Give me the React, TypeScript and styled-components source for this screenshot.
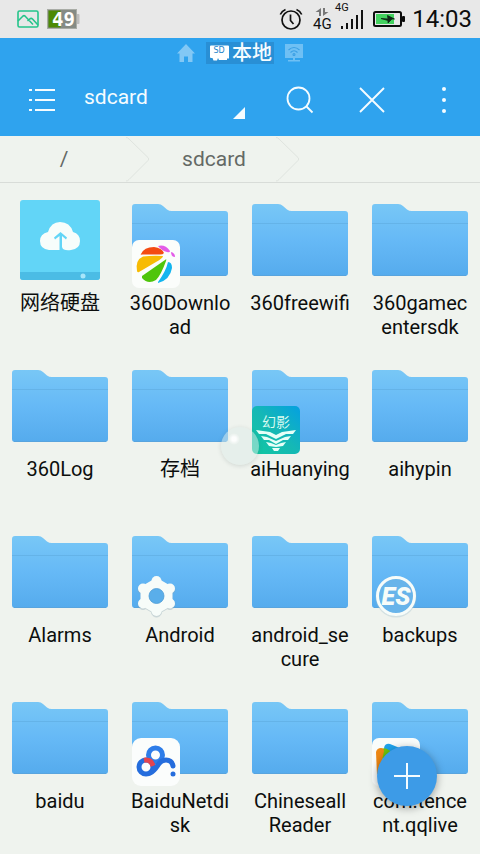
import React from "react";
import styled, { createGlobalStyle } from "styled-components";

const GlobalStyle = createGlobalStyle`
  *, *::before, *::after { box-sizing: border-box; }
  body {
    margin: 0;
    background: #eff3ee;
    color: #0c0e0d;
    font-family: Roboto, "Noto Sans CJK SC", sans-serif;
  }
  button { font: inherit; color: inherit; background: none; border: 0; padding: 0; cursor: pointer; }
  svg { display: block; flex: none; }
`;

/* ---------- status bar ---------- */

const StatusBar = styled.div`
  display: flex;
  align-items: center;
  justify-content: space-between;
  height: 38px;
  padding: 0 8px 0 16px;
  background: #e8e8e8;
`;

const StatusGroup = styled.div<{ $gap: number }>`
  display: flex;
  align-items: center;
  gap: ${(p) => p.$gap}px;
`;

const Clock = styled.time`
  font-size: 24px;
  line-height: 38px;
  color: #0d0d0d;
`;

const PictureIcon = () => (
  <svg width="24" height="20" viewBox="0 0 24 20" fill="none" stroke="#25c48a" strokeWidth="1.6">
    <rect x="2" y="2" width="20" height="16" rx="1.5" />
    <path d="M2 12 L7 7 Q8 6.300 9 7 L17 15.500 M11.500 12 L14.500 9.500 Q15.500 9 16.500 10 L22 16" />
  </svg>
);

const BatteryLevelIcon = () => (
  <svg width="33" height="20" viewBox="0 0 33 20">
    <rect x="29" y="5" width="3.500" height="10" rx="1" fill="#bdbdbd" />
    <rect x="0.500" y="0.500" width="29" height="19" fill="#858b85" stroke="#a9aca6" />
    <rect x="1.500" y="1.500" width="12" height="17" fill="#4c8a05" />
    <text x="5" y="17" fontFamily="DejaVu Sans Mono" fontWeight="700" fontSize="19" fill="#fff">
      49
    </text>
  </svg>
);

const AlarmIcon = () => (
  <svg width="24" height="24" viewBox="0 0 24 24" fill="none" stroke="#111" strokeWidth="1.7">
    <circle cx="12" cy="13" r="9" />
    <path d="M11.500 7.500 V13.500 L14.500 17" />
    <path d="M1.300 7.500 Q3 4 6.500 2.500 M22.700 7.500 Q21 4 17.500 2.500" />
  </svg>
);

const SignalIcon = () => (
  <svg width="57" height="38" viewBox="-3 -4 57 38">
    <g fill="#777">
      <path d="M9 4 V12 H7 V8 H3.500 Z M11 12 V4 H13 V8 H16.500 Z" />
    </g>
    <text x="1" y="25" fontSize="15" fill="#111">4G</text>
    <text x="23" y="7" fontSize="11" fill="#111">4G</text>
    <g fill="#111">
      <rect x="29" y="22" width="2" height="3" />
      <rect x="34" y="19" width="2" height="6" />
      <rect x="39" y="15" width="2" height="10" />
      <rect x="44" y="11" width="2" height="14" />
      <rect x="49" y="6" width="2" height="19" />
    </g>
  </svg>
);

const ChargingIcon = () => (
  <svg width="34" height="18" viewBox="0 0 34 18">
    <rect x="2" y="2" width="27" height="14" rx="1.500" fill="none" stroke="#0c0c0c" strokeWidth="2" />
    <rect x="30" y="6" width="3" height="6" rx="1" fill="#0c0c0c" />
    <rect x="4" y="4" width="18" height="10" fill="#43d15f" />
    <path d="M9 8.500 L16 9 L15.500 5.500 L22.500 9 L20 9 L16 13 L16 10.500 Z" fill="#102818" stroke="#102818" strokeWidth="0.800" />
  </svg>
);

/* ---------- header ---------- */

const Header = styled.header`
  background: #2fa3ee;
  color: #f5fcff;
`;

const TabRow = styled.nav`
  display: flex;
  justify-content: center;
  align-items: center;
  gap: 11px;
  height: 29px;
`;

const TabButton = styled.button<{ $active?: boolean }>`
  display: flex;
  align-items: center;
  gap: 3px;
  height: 22px;
  padding: ${(p) => (p.$active ? "0 2px 0 4px" : "0")};
  background: ${(p) => (p.$active ? "#298fd5" : "transparent")};
  font-size: 20px;
  font-weight: 500;
  line-height: 22px;
`;

const Toolbar = styled.div`
  display: flex;
  align-items: center;
  height: 69px;
  padding: 0 0 3px 6px;
`;

const IconButton = styled.button`
  display: flex;
  align-items: center;
  justify-content: center;
  width: 72px;
  height: 64px;
`;

const PathPicker = styled.label`
  display: flex;
  flex: 1;
  align-items: flex-end;
  height: 64px;
  padding: 0 19px 13px 6px;
`;

const PathSelect = styled.select`
  flex: 1;
  min-width: 0;
  height: 40px;
  padding: 0 0 4px;
  border: 0;
  appearance: none;
  background: transparent;
  color: inherit;
  font: 21px Roboto, sans-serif;
`;

const HomeIcon = () => (
  <svg width="18" height="18" viewBox="0 0 18 18" fill="#82c8f5">
    <path d="M9 0 L18 9.500 H15.500 V18 H11 V12.500 H7 V18 H2.500 V9.500 H0 Z" />
  </svg>
);

const SdIcon = () => (
  <svg width="19" height="16" viewBox="0 0 19 16">
    <path
      d="M1 0.500 H18 Q19 0.500 19 1.500 V13.500 H17 V15 H9 L8 13 L7 15.500 H3.500 L2.500 13 H1 Q0 13 0 12 V1.500 Q0 0.500 1 0.500 Z"
      fill="#fff"
    />
    <text x="3.500" y="8" fontFamily="DejaVu Sans" fontSize="8" fill="#2384ca">SD</text>
  </svg>
);

const NetworkIcon = () => (
  <svg width="18" height="18" viewBox="0 0 18 18">
    <path d="M0 0 H18 V14 H10 V16 H15 V17.500 H3 V16 H8 V14 H0 Z" fill="#6fc0f4" />
    <g fill="none" stroke="#3a9fe4" strokeWidth="1.100">
      <path d="M3.500 6 Q9 1 14.500 6 M5.500 8.500 Q9 5 12.500 8.500" />
      <circle cx="9" cy="10.500" r="1" />
    </g>
  </svg>
);

const ListIcon = () => (
  <svg width="28" height="24" viewBox="0 0 28 24" fill="#f5fcff">
    <path d="M1 1h3v2H1z M7 1h20v2H7z M1 11h3v2H1z M7 11h20v2H7z M1 21h3v2H1z M7 21h20v2H7z" />
  </svg>
);

const SearchIcon = () => (
  <svg width="28" height="28" viewBox="0 0 28 28" fill="none" stroke="#f5fcff" strokeWidth="1.800">
    <circle cx="12.500" cy="12.500" r="11" />
    <path d="M20 20 L26.500 26.500" />
  </svg>
);

const CloseIcon = () => (
  <svg width="28" height="28" viewBox="0 0 28 28" fill="none" stroke="#f5fcff" strokeWidth="1.900">
    <path d="M2 2 L26 26 M26 2 L2 26" />
  </svg>
);

const MoreIcon = () => (
  <svg width="6" height="28" viewBox="0 0 6 28" fill="#f5fcff">
    <circle cx="3" cy="3" r="2" />
    <circle cx="3" cy="14" r="2" />
    <circle cx="3" cy="25" r="2" />
  </svg>
);

const Corner = () => (
  <svg width="12" height="12" viewBox="0 0 12 12" fill="#f5fcff">
    <path d="M12 0 V12 H0 Z" />
  </svg>
);

/* ---------- breadcrumbs ---------- */

const Breadcrumbs = styled.nav`
  display: flex;
  height: 47px;
  border-bottom: 1px solid #d8dcd8;
`;

const Crumb = styled.a`
  display: flex;
  align-items: center;
  width: 150px;
  color: #646965;
  font-size: 21px;
  text-decoration: none;

  & > span { padding-left: 2px; }
`;

const CrumbText = styled.span`
  flex: 1;
  text-align: center;
`;

const CrumbArrow = () => (
  <svg width="24" height="46" viewBox="0 0 24 46" fill="none" stroke="#dfe4df">
    <path d="M0 1.500 Q2 1.500 3 3 L22 21.500 Q23.500 23 22 24.500 L3 43.500 Q2 45 0 45" />
  </svg>
);

/* ---------- file grid ---------- */

const FileGrid = styled.ul`
  display: grid;
  grid-template-columns: repeat(4, 1fr);
  grid-auto-rows: 166px;
  margin: 0;
  padding: 0;
  list-style: none;
`;

const FileButton = styled.button`
  display: flex;
  flex-direction: column;
  align-items: center;
  width: 100%;
  padding: 9px 9px 0;
`;

const Thumb = styled.span`
  position: relative;
  display: flex;
  align-items: center;
  justify-content: center;
  width: 96px;
  height: 96px;
`;

const Badge = styled.span`
  position: absolute;
  left: 0;
  bottom: 0;
`;

const FileName = styled.span`
  width: 102px;
  margin-top: 3px;
  font-size: 20px;
  line-height: 24px;
  text-align: center;
  word-break: break-all;
`;

const FolderIcon = () => (
  <svg width="96" height="72" viewBox="0 0 96 72">
    <defs>
      <linearGradient id="folder" x1="0" y1="0" x2="0" y2="1">
        <stop offset="0" stopColor="#78c7f6" />
        <stop offset="0.500" stopColor="#66b9f6" />
        <stop offset="1" stopColor="#55abed" />
      </linearGradient>
    </defs>
    <path
      d="M3 0 H26 Q29 0 31 2 L35 5.500 Q37 7 40 7 H93 Q96 7 96 10 V69 Q96 72 93 72 H3 Q0 72 0 69 V3 Q0 0 3 0 Z"
      fill="url(#folder)"
    />
    <path d="M0 19.500 H96" stroke="#64b3e8" />
    <path d="M2 71.500 H94" stroke="#58a4de" />
  </svg>
);

const CloudDriveIcon = () => (
  <svg width="82" height="82" viewBox="0 0 82 82">
    <rect x="1" y="1" width="80" height="80" rx="3" fill="#62d5f7" />
    <path d="M1 73 H81 V78 Q81 81 78 81 H4 Q1 81 1 78 Z" fill="#4bbce5" />
    <circle cx="64" cy="77" r="2.500" fill="#a8e6fa" />
    <path
      d="M30 51 Q21 50 21 42 Q21 35 29 33 Q32 23 41 23 Q51 23 54 33 Q61 35 61 42 Q61 50 52 51 Q44 52 43 48 V37 L47 40.500 L48 38.500 L41.500 33 L35 38.500 L36 40.500 L40.500 37 V51 Z"
      fill="#f7fdfb"
    />
  </svg>
);

const Download360Badge = () => (
  <svg width="48" height="48" viewBox="0 0 48 48">
    <rect width="48" height="48" rx="7" fill="#fbfdfb" />
    <path d="M9 14 Q12 7 22 7 Q30 8 32 13 Q31 14.500 28 14.500 H10 Q8 15 9 14 Z" fill="#f44b12" />
    <path d="M5 31 Q3 20 11 16.500 Q20 15.500 31 16 Q31 18 24 22 L7 32 Q5.500 33 5 31 Z" fill="#f7bb05" />
    <path d="M10 36 L33 20 Q35 18 34 21 Q29 35 24 40 Q16 45 10 38 Z" fill="#4fc50b" />
    <path d="M26 42 Q34 31 36 22 Q40 22 40 28 Q38 40 26 43 Z" fill="#12b5ef" />
    <path d="M26 6 Q33 4 38 11 Q38 13 35 12 Q30 11 26 6 Z M39 12 Q43 13 43 17 Q39 17 39 12 Z" fill="#e35be8" />
  </svg>
);

const HuanyingBadge = () => (
  <svg width="48" height="48" viewBox="0 0 48 48">
    <defs>
      <linearGradient id="huanying" x1="0" y1="1" x2="1" y2="0">
        <stop offset="0" stopColor="#12c8a0" />
        <stop offset="0.500" stopColor="#15b8b5" />
        <stop offset="1" stopColor="#04a0e1" />
      </linearGradient>
    </defs>
    <rect width="48" height="48" rx="5" fill="url(#huanying)" />
    <text x="24" y="21" fontFamily="Noto Sans CJK SC" fontSize="14" textAnchor="middle" fill="#d7faf0">
      幻影
    </text>
    <g fill="#e6fff7">
      <path d="M4 24 L18 26 L24 29 L30 26 L44 24 L41 28 L34 28 L24 33 L14 28 L7 28 Z" />
      <path d="M9 30 L15 31 L24 35 L33 31 L39 30 L36 34 L31 34 L24 38 L17 34 L12 34 Z" />
      <path d="M14 36 L19 37 L24 39 L29 37 L34 36 L31 40 L24 41 L17 40 Z" />
      <path d="M20 42 H28 L26 45 H22 Z" />
    </g>
  </svg>
);

const GearBadge = () => {
  const shape = (
    <>
      <path d="M24.500 9 L37.500 16.500 V31.500 L24.500 39 L11.500 31.500 V16.500 Z" strokeWidth="6" strokeLinejoin="round" />
      <circle cx="24.500" cy="9" r="5" />
      <circle cx="38" cy="16.500" r="5" />
      <circle cx="38" cy="31.500" r="5" />
      <circle cx="24.500" cy="39" r="5" />
      <circle cx="11" cy="31.500" r="5" />
      <circle cx="11" cy="16.500" r="5" />
    </>
  );
  return (
    <svg width="48" height="48" viewBox="0 0 48 48">
      <g fill="#8fa9b5" stroke="#8fa9b5" opacity="0.400" transform="translate(0 1)">{shape}</g>
      <g fill="#f7fcf9" stroke="#f7fcf9" strokeWidth="0">{shape}</g>
      <circle cx="24.500" cy="24" r="7.500" fill="#5aaeea" stroke="#4c9cd4" strokeWidth="0.800" />
    </svg>
  );
};

const EsBadge = () => (
  <svg width="48" height="48" viewBox="0 0 48 48">
    <circle cx="24" cy="25" r="19" fill="#68b3e8" stroke="#a9c2cd" strokeWidth="3" strokeOpacity="0.400" />
    <circle cx="24" cy="24" r="18.500" fill="#68b4ea" stroke="#f7fcf9" strokeWidth="3" />
    <text x="24" y="33" fontFamily="Roboto" fontSize="25" fontWeight="900" fontStyle="italic" textAnchor="middle" fill="#f7fcf9">
      ES
    </text>
  </svg>
);

const NetdiskBadge = () => (
  <svg width="48" height="48" viewBox="0 0 48 48" fill="none" strokeWidth="5">
    <rect width="48" height="48" rx="9" fill="#fbfdfc" />
    <circle cx="23.500" cy="17" r="7" stroke="#2e7de9" />
    <circle cx="14" cy="29" r="7" stroke="#256ddd" />
    <path d="M12 22.300 Q19 21 21 28" stroke="#e34450" />
    <path d="M18 35 Q22 33 26 27 Q29 22 34 22 Q40 22 41 28" stroke="#256ddd" strokeLinecap="round" />
    <circle cx="41" cy="36" r="2.500" fill="#256ddd" stroke="none" />
  </svg>
);

const VideoBadge = () => (
  <svg width="48" height="48" viewBox="0 0 48 48">
    <rect width="48" height="48" rx="7" fill="#f9fcfb" />
    <path d="M12 10 Q13 5 18 6 L40 15 L36 36 L20 30 Z" fill="#1ea2ec" />
    <path d="M9 12 Q11 9 15 11 L30 20 L12 34 Z" fill="#6cc60f" />
    <path d="M4 14 Q5 10 9 10 Q12 10 12 13 L8 32 L5 37 Z" fill="#ee8815" />
  </svg>
);

/* ---------- floating controls ---------- */

const AddButton = styled.button`
  position: fixed;
  right: 43px;
  bottom: 48px;
  display: flex;
  align-items: center;
  justify-content: center;
  width: 60px;
  height: 60px;
  border-radius: 50%;
  background: #3d9be7;
  box-shadow: 0 2px 9px rgba(0, 0, 0, 0.35);
`;

const AssistBubble = styled.button`
  position: fixed;
  left: calc(50% - 19px);
  top: 50%;
  width: 38px;
  height: 38px;
  border-radius: 50%;
  background:
    radial-gradient(circle at 13px 12px, rgba(255, 255, 255, 0.9) 0 2px, transparent 6px),
    rgba(222, 236, 232, 0.5);
  box-shadow: 0 1px 4px rgba(70, 90, 90, 0.18);
`;

const PlusIcon = () => (
  <svg width="26" height="26" viewBox="0 0 26 26" fill="#f5fcff">
    <path d="M12 0h2v12h12v2H14v12h-2V14H0v-2h12z" />
  </svg>
);

type Entry = { name: string; drive?: boolean; badge?: React.ComponentType };

const entries: Entry[] = [
  { name: "网络硬盘", drive: true },
  { name: "360Download", badge: Download360Badge },
  { name: "360freewifi" },
  { name: "360gamecentersdk" },
  { name: "360Log" },
  { name: "存档" },
  { name: "aiHuanying", badge: HuanyingBadge },
  { name: "aihypin" },
  { name: "Alarms" },
  { name: "Android", badge: GearBadge },
  { name: "android_secure" },
  { name: "backups", badge: EsBadge },
  { name: "baidu" },
  { name: "BaiduNetdisk", badge: NetdiskBadge },
  { name: "Chineseall Reader" },
  { name: "com.tencent.qqlive", badge: VideoBadge },
];

function FileItem({ name, drive, badge: BadgeIcon }: Entry) {
  return (
    <li>
      <FileButton type="button">
        <Thumb>
          {drive ? <CloudDriveIcon /> : <FolderIcon />}
          {BadgeIcon && (
            <Badge>
              <BadgeIcon />
            </Badge>
          )}
        </Thumb>
        <FileName>{name}</FileName>
      </FileButton>
    </li>
  );
}

export default function App() {
  return (
    <>
      <GlobalStyle />
      <StatusBar>
        <StatusGroup $gap={7}>
          <PictureIcon />
          <BatteryLevelIcon />
        </StatusGroup>
        <StatusGroup $gap={6}>
          <AlarmIcon />
          <SignalIcon />
          <ChargingIcon />
          <Clock>14:03</Clock>
        </StatusGroup>
      </StatusBar>
      <Header>
        <TabRow aria-label="Locations">
          <TabButton type="button" aria-label="Home">
            <HomeIcon />
          </TabButton>
          <TabButton type="button" $active>
            <SdIcon />
            本地
          </TabButton>
          <TabButton type="button" aria-label="Network">
            <NetworkIcon />
          </TabButton>
        </TabRow>
        <Toolbar>
          <IconButton type="button" aria-label="Menu">
            <ListIcon />
          </IconButton>
          <PathPicker>
            <PathSelect aria-label="Storage" defaultValue="sdcard">
              <option value="sdcard">sdcard</option>
            </PathSelect>
            <Corner />
          </PathPicker>
          <IconButton type="button" aria-label="Search">
            <SearchIcon />
          </IconButton>
          <IconButton type="button" aria-label="Close">
            <CloseIcon />
          </IconButton>
          <IconButton type="button" aria-label="More">
            <MoreIcon />
          </IconButton>
        </Toolbar>
      </Header>
      <Breadcrumbs aria-label="Path">
        <Crumb href="#root">
          <CrumbText>/</CrumbText>
          <CrumbArrow />
        </Crumb>
        <Crumb href="#sdcard">
          <CrumbText>sdcard</CrumbText>
          <CrumbArrow />
        </Crumb>
      </Breadcrumbs>
      <main>
        <FileGrid>
          {entries.map((entry) => (
            <FileItem key={entry.name} {...entry} />
          ))}
        </FileGrid>
      </main>
      <AssistBubble type="button" aria-label="Assistant" />
      <AddButton type="button" aria-label="Add">
        <PlusIcon />
      </AddButton>
    </>
  );
}
